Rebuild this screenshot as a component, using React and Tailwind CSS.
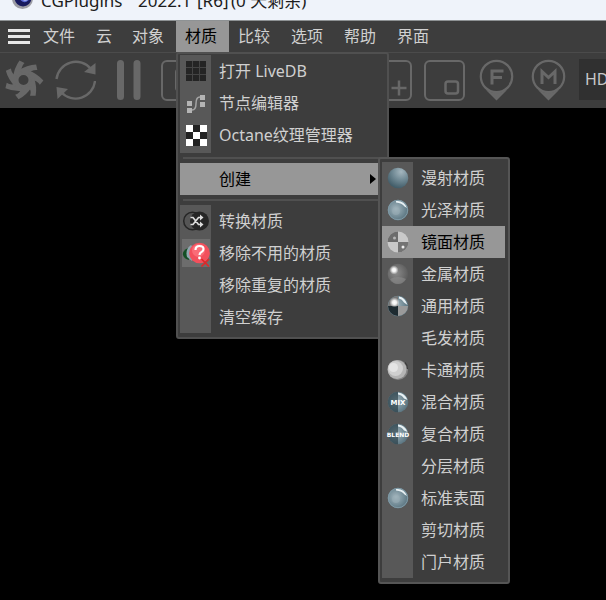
import React from "react";

const FONT = "font-['Noto_Sans','Noto_Sans_CJK_SC',sans-serif]";

function Ball({ kind }) {
  const id = "ball-" + kind;
  const dark = kind === "metal";
  const label = kind === "mix" ? "MIX" : kind === "blend" ? "BLEND" : null;
  if (kind === "specular") {
    return (
      <svg className="size-[22px]" viewBox="0 0 22 22" aria-hidden="true">
        <circle cx="11" cy="11" r="10.5" fill="#c9c9c9" />
        <path d="M11 11V.5A10.5 10.5 0 0 0 .5 11Z" fill="#6c6c6c" />
        <path d="M11 11V21.5A10.5 10.5 0 0 0 21.5 11Z" fill="#747474" />
        <circle cx="7.5" cy="7" r="1.5" fill="#b5b5b5" />
        <circle cx="16" cy="16" r="1.5" fill="#eee" />
      </svg>
    );
  }
  if (kind === "toon") {
    return (
      <svg className="size-[22px]" viewBox="0 0 22 22" aria-hidden="true">
        <circle cx="11" cy="11" r="10" fill="#858585" />
        <circle cx="10" cy="10.5" r="9.5" fill="#b4b4b4" />
        <circle cx="8.5" cy="9.5" r="7.5" fill="#d0d0d0" />
        <circle cx="6.5" cy="8.5" r="4.5" fill="#e4e4e4" />
        <path d="M18 3.5Q20.5 6 20.5 10" stroke="#3c3c3c" strokeWidth="1.2" fill="none" />
      </svg>
    );
  }
  return (
    <svg className="size-[22px] overflow-visible" viewBox="0 0 22 22" aria-hidden="true">
      <defs>
        <radialGradient id={id} cx={kind === "diffuse" ? "0.65" : "0.4"} cy={kind === "diffuse" ? "0.2" : "0.45"} r="0.8">
          <stop offset="0" stopColor={dark ? "#8c8c8c" : "#a4b6be"} />
          <stop offset="0.5" stopColor={dark ? "#6c6c6c" : "#718a95"} />
          <stop offset="1" stopColor={dark ? "#4a4a4a" : "#425d69"} />
        </radialGradient>
        <radialGradient id={id + "-spot"}>
          <stop offset="0" stopColor="#fff" />
          <stop offset="0.4" stopColor="#fff" stopOpacity="0.9" />
          <stop offset="1" stopColor="#fff" stopOpacity="0" />
        </radialGradient>
      </defs>
      <circle cx="11" cy="11" r="10.3" fill={`url(#${id})`} />
      {kind === "glossy" && (
        <>
          <circle cx="11" cy="11" r="9.7" fill="none" stroke="#809aa6" strokeWidth="1" />
          <circle cx="9" cy="12" r="4" fill="#9cb0b8" opacity="0.5" />
          <path d="M9 2Q17 1 20 9L17.5 7.5Q15 4 9 3.5Z" fill="#e9f1f4" />
        </>
      )}
      {dark && (
        <>
          <path d="M3 16Q11 12 19 16Q16 21 11 21Q6 21 3 16Z" fill="#8d8d8d" opacity="0.6" />
          <circle cx="7" cy="7" r="4.5" fill={`url(#${id}-spot)`} />
        </>
      )}
      {kind === "universal" && (
        <>
          <path d="M11 11V1A10 10 0 0 0 1 11Z" fill="#777" />
          <path d="M11 11H1A10 10 0 0 0 11 21Z" fill="#1e2b31" />
          <path d="M11 11V21A10 10 0 0 0 21 11Z" fill="#9a9a9a" />
          <path d="M12 1.5Q18 2 20.5 10L17 7.5Q15 4 12 3.5Z" fill="#e9f1f4" />
          <circle cx="7.5" cy="7.5" r="5" fill={`url(#${id}-spot)`} />
        </>
      )}
      {label && (
        <>
          <path d="M11 .7A10.3 10.3 0 0 0 11 21.3Z" fill="#1f333c" opacity="0.6" />
          <path d="M11 1.5Q18 2 20.5 9L17 7.5Q15 4 11 3.5Z" fill="#e9f1f4" />
          <text
            x="11"
            y="13.5"
            textAnchor="middle"
            fontSize={label === "MIX" ? 7 : 6}
            fontWeight="700"
            fill="#fff"
            fontFamily="DejaVu Sans, sans-serif"
          >
            {label}
          </text>
        </>
      )}
    </svg>
  );
}

function GridIcon() {
  return (
    <svg className="size-[22px]" viewBox="0 0 22 22" aria-hidden="true">
      <rect x="1" y="1" width="20" height="20" fill="#444" />
      {[1, 8, 15].map((y) => [1, 8, 15].map((x) => <rect key={x + "-" + y} x={x} y={y} width="6" height="6" fill="#242424" />))}
    </svg>
  );
}

function NodesIcon() {
  return (
    <svg className="size-[22px]" viewBox="0 0 22 22" aria-hidden="true">
      <path d="M5 18H7Q11 18 11 11.5Q11 5 15 5H17" fill="none" stroke="#a5a5a5" strokeWidth="1.5" />
      <path d="M2 9H7V14H2ZM2 16H7V21H2ZM15 3H20V8H15ZM15 10H20V15H15Z" fill="#b4b4b4" />
    </svg>
  );
}

function CheckerIcon() {
  return (
    <svg className="size-[22px]" viewBox="0 0 22 22" aria-hidden="true">
      <rect x="1" y="1" width="21" height="21" fill="#222" />
      <path d="M1 1H8V8H1ZM15 1H22V8H15ZM8 8H15V15H8ZM1 15H8V22H1ZM15 15H22V22H15Z" fill="#fff" />
    </svg>
  );
}

function ShuffleIcon() {
  return (
    <svg className="h-[22px] w-[28px]" viewBox="0 0 28 22" aria-hidden="true">
      <circle cx="10.5" cy="11" r="8.8" fill="#555" stroke="#262626" strokeWidth="1.5" />
      <circle cx="17.5" cy="11" r="9.5" fill="#262626" />
      <path d="M8.5 7.5H11L16.5 14.5H19M8.5 14.5H11L16.5 7.5H19" fill="none" stroke="#ddd" strokeWidth="1.7" />
      <path d="M18 4.5L21.5 7.5L18 10.5ZM18 11.5L21.5 14.5L18 17.5Z" fill="#ddd" />
    </svg>
  );
}

function RemoveIcon() {
  return (
    <svg className="size-[28px]" viewBox="0 0 28 28" aria-hidden="true">
      <rect width="28" height="28" fill="#6d6d6d" />
      <path d="M6 9Q0 12 1 16Q2 20 7 21Z" fill="#144f24" />
      <path d="M9 6Q3 10 5 18L10 22V7Z" fill="#8fa5ae" />
      <circle cx="17.5" cy="14" r="10.3" fill="#f2505c" />
      <circle cx="16.5" cy="11.5" r="6.5" fill="#ff7f88" opacity="0.6" />
      <path
        d="M13.5 11Q13.5 7 17.5 7Q21.5 7 21.5 10Q21.5 12 19.5 13Q17.5 14 17.5 16"
        fill="none"
        stroke="#fff"
        strokeWidth="2.2"
      />
      <circle cx="17.5" cy="19" r="1.4" fill="#fff" />
      <path d="M19.5 20L27 27.5M27 20L19.5 27.5" stroke="#e32626" strokeWidth="1.6" />
    </svg>
  );
}

const materials = [
  ["漫射材质", "diffuse"],
  ["光泽材质", "glossy"],
  ["镜面材质", "specular"],
  ["金属材质", "metal"],
  ["通用材质", "universal"],
  ["毛发材质", null],
  ["卡通材质", "toon"],
  ["混合材质", "mix"],
  ["复合材质", "blend"],
  ["分层材质", null],
  ["标准表面", "glossy"],
  ["剪切材质", null],
  ["门户材质", null],
];

function MenuRow({ icon, label, active, arrow }) {
  return (
    <button
      type="button"
      className={`flex h-8 w-full items-center text-left ${active ? "bg-[#979797] text-black" : "text-[#d0d0d0]"}`}
    >
      <span className={`flex h-8 w-[31px] shrink-0 items-center justify-center ${active ? "" : "bg-[#585858]"}`}>{icon}</span>
      <span className="grow pb-px pl-2 whitespace-nowrap">{label}</span>
      {arrow && (
        <svg className="mr-[2px] h-[10px] w-[6px]" viewBox="0 0 6 10" aria-hidden="true">
          <path d="M0 0L6 5L0 10Z" fill="#000" />
        </svg>
      )}
    </button>
  );
}

function Separator() {
  return (
    <div className="flex items-center py-[4px] pl-[3px]" role="separator">
      <div className="h-[2px] w-full bg-[#505050]" />
    </div>
  );
}

function Submenu() {
  return (
    <div className="absolute -top-[6px] left-[198px] z-20 w-[132px] rounded-[3px] border-2 border-[#555] bg-[#3d3d3d] pt-[3px] pr-[3px] pb-[4px] pl-[2px]">
      {materials.map(([label, kind]) => (
        <MenuRow key={label} label={label} active={kind === "specular"} icon={kind && <Ball kind={kind} />} />
      ))}
    </div>
  );
}

function MaterialMenu() {
  return (
    <div className="absolute top-full left-0 z-10 w-[213px] rounded-[3px] border-2 border-[#505050] bg-[#3d3d3d] px-[2px] pt-px pb-[4px]">
      <MenuRow label="打开 LiveDB" icon={<GridIcon />} />
      <MenuRow label="节点编辑器" icon={<NodesIcon />} />
      <MenuRow label="Octane纹理管理器" icon={<CheckerIcon />} />
      <div className="h-[2px] w-[31px] bg-[#585858]" />
      <Separator />
      <div className="relative pr-[7px]">
        <MenuRow label="创建" active arrow />
        <Submenu />
      </div>
      <Separator />
      <MenuRow label="转换材质" icon={<ShuffleIcon />} />
      <MenuRow label="移除不用的材质" icon={<RemoveIcon />} />
      <MenuRow label="移除重复的材质" />
      <MenuRow label="清空缓存" />
    </div>
  );
}

function TitleBar() {
  return (
    <header className="flex h-[21px] items-end overflow-hidden border-b border-[#8e9294] bg-[#eff3fa] pl-3 text-[#1c1c1c]">
      <svg className="mb-[11px] size-[21px] shrink-0" viewBox="0 0 20 20" aria-hidden="true">
        <circle cx="10" cy="10" r="10" fill="#9c9ca4" />
        <circle cx="10.5" cy="9.5" r="8" fill="#17195e" />
        <circle cx="12" cy="9" r="4.5" fill="#5a6ad4" />
        <circle cx="12.5" cy="9.5" r="2.5" fill="#dfe6ff" />
      </svg>
      <h1 className="mb-[9px] flex pl-2 text-[17px] leading-5 whitespace-nowrap">
        <span className="w-[97px]">CGPlugins</span>
        <span className="w-[59px]">2022.1</span>
        <span className="w-[34px]">[R6]</span>
        <span>(0 天剩余)</span>
      </h1>
    </header>
  );
}

const menusBefore = ["文件", "云", "对象"];
const menusAfter = ["比较", "选项", "帮助", "界面"];

function MenuBar() {
  const cell = (label) => (
    <button key={label} type="button" className={`h-full pb-[2px] pl-[9px] text-left ${label.length === 1 ? "w-[36px]" : "w-[53px]"}`}>
      {label}
    </button>
  );
  return (
    <nav className="flex h-[31px] items-center text-[#d0d0d0]">
      <button type="button" aria-label="菜单" className="flex h-full w-[34px] flex-col justify-center gap-[3px] pl-2">
        <span className="h-[3px] w-[22px] bg-[#e8e8e8]" />
        <span className="h-[3px] w-[22px] bg-[#e8e8e8]" />
        <span className="h-[3px] w-[22px] bg-[#e8e8e8]" />
      </button>
      {menusBefore.map(cell)}
      <div className="relative h-full">
        <button type="button" className="h-full w-[53px] bg-[#979797] pb-[2px] pl-[9px] text-left text-black">
          材质
        </button>
        <MaterialMenu />
      </div>
      {menusAfter.map(cell)}
    </nav>
  );
}

function ToolButton({ label, children }) {
  return (
    <button type="button" aria-label={label} className="shrink-0">
      <svg className="size-[42px]" viewBox="0 0 42 42" fill="none" stroke="#686868" strokeWidth="2" aria-hidden="true">
        {children}
      </svg>
    </button>
  );
}

function Pin({ children }) {
  return (
    <>
      <path d="M11 31Q21 37 32 31L21.5 41.5Z" fill="#686868" stroke="none" />
      <circle cx="21.5" cy="17.5" r="15.7" strokeWidth="2.2" />
      {children}
    </>
  );
}

const blades = [0, 51, 103, 154, 206, 257, 309];

function Toolbar() {
  return (
    <div className="flex h-[56px] items-center overflow-hidden border-t border-[#4b4b4b] pb-[2px] pl-[2px]">
      <div className="flex w-[369px] shrink-0 gap-[10px]">
        <ToolButton label="渲染">
          <circle cx="21.5" cy="21" r="8" strokeWidth="6" />
          {blades.map((angle) => (
            <path key={angle} d="M11 19Q12 9 17.5 1.5L22.5 4Q18.5 8 20 14Z" fill="#686868" stroke="none" transform={`rotate(${angle} 21.5 21)`} />
          ))}
        </ToolButton>
        <ToolButton label="刷新">
          <path d="M2.5 20A19.5 19.5 0 0 1 37 10M41 22A19.5 19.5 0 0 1 7 33" strokeWidth="2.4" />
          <path d="M41.5 4V15.5L30 13ZM2.500 28L14 30L3.5 40Z" fill="#686868" stroke="none" />
        </ToolButton>
        <ToolButton label="暂停">
          <path d="M14.5 4.5V37.5M31 4.5V37.5" strokeWidth="7" strokeLinecap="round" />
        </ToolButton>
        <ToolButton label="区域">
          <rect x="4" y="2" width="39" height="39" rx="5" />
          <rect x="18" y="11" width="20" height="20" rx="2" />
        </ToolButton>
      </div>
      <div className="flex grow items-center gap-[10px]">
        <ToolButton label="添加区域">
          <rect x="1" y="2" width="39" height="39" rx="5" />
          <path d="M20.5 29H35.5M28 21.5V36.5" strokeWidth="2.5" />
        </ToolButton>
        <ToolButton label="小窗">
          <rect x="2" y="2" width="39" height="39" rx="5" />
          <rect x="22.5" y="22.5" width="12.5" height="12" rx="2.5" strokeWidth="2.5" />
        </ToolButton>
        <ToolButton label="对焦">
          <Pin>
            <path d="M17 25.5V12H28.5M17 18.5H27" strokeWidth="3" />
          </Pin>
        </ToolButton>
        <ToolButton label="材质拾取">
          <Pin>
            <path d="M15 25V12.5L21.5 18.5L28 12.5V25" strokeWidth="3" />
          </Pin>
        </ToolButton>
        <button type="button" className="h-[41px] w-[96px] shrink-0 bg-[#303030] pb-[2px] pl-[6px] text-left text-[#c8c8c8]">
          HD
        </button>
      </div>
    </div>
  );
}

export default function App() {
  return (
    <div className={`min-h-screen overflow-hidden bg-black text-base ${FONT}`}>
      <TitleBar />
      <div className="bg-[#3d3d3d]">
        <MenuBar />
        <Toolbar />
      </div>
    </div>
  );
}
